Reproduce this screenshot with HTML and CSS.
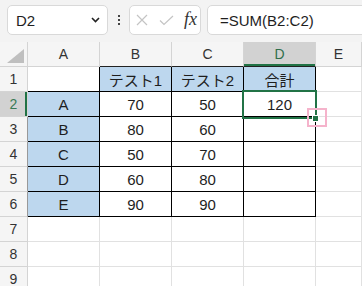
FILE: index.html
```html
<!DOCTYPE html>
<html lang="ja">
	<head>
		<meta charset="UTF-8" />
		<meta name="viewport" content="width=device-width, initial-scale=1.0" />
		<title>Sheet</title>
		<link rel="stylesheet" href="styles.css">
	</head>
	<body>
		<header class="toolbar">
			<div class="namebox">
				<span>D2</span>
				<svg class="chevron" width="9" height="6" viewBox="0 0 9 6"><path d="M1 1 L4.5 4.5 L8 1" fill="none" stroke="#222" stroke-width="1.6"/></svg>
			</div>
			<div class="dots"><i></i><i></i><i></i></div>
			<div class="fxbox">
				<svg width="12" height="12" viewBox="0 0 12 12"><path d="M1 1 L11 11 M11 1 L1 11" stroke="#c4c4c4" stroke-width="1.2"/></svg>
				<svg width="15" height="11" viewBox="0 0 15 11"><path d="M1 5.5 L5 9.5 L14 1" fill="none" stroke="#c4c4c4" stroke-width="1.2"/></svg>
				<span class="fx">fx</span>
			</div>
			<div class="formula">=SUM(B2:C2)</div>
		</header>
		<main class="sheet">
			<div class="corner"><span></span></div>
			<div class="colhead">A</div>
			<div class="colhead edge">B</div>
			<div class="colhead edge">C</div>
			<div class="colhead sel">D</div>
			<div class="colhead">E</div>

			<div class="rowhead">1</div>
			<div class="cell a1"></div>
			<div class="cell t blue">テスト1</div>
			<div class="cell t blue">テスト2</div>
			<div class="cell t blue">合計</div>
			<div class="cell"></div>

			<div class="rowhead sel">2</div>
			<div class="cell t blue">A</div>
			<div class="cell t">70</div>
			<div class="cell t">50</div>
			<div class="cell t active">120<span class="handle"></span><span class="mark"></span></div>
			<div class="cell"></div>

			<div class="rowhead edge">3</div>
			<div class="cell t blue">B</div>
			<div class="cell t">80</div>
			<div class="cell t">60</div>
			<div class="cell t"></div>
			<div class="cell"></div>

			<div class="rowhead edge">4</div>
			<div class="cell t blue">C</div>
			<div class="cell t">50</div>
			<div class="cell t">70</div>
			<div class="cell t"></div>
			<div class="cell"></div>

			<div class="rowhead edge">5</div>
			<div class="cell t blue">D</div>
			<div class="cell t">60</div>
			<div class="cell t">80</div>
			<div class="cell t"></div>
			<div class="cell"></div>

			<div class="rowhead edge">6</div>
			<div class="cell t blue">E</div>
			<div class="cell t">90</div>
			<div class="cell t">90</div>
			<div class="cell t"></div>
			<div class="cell"></div>

			<div class="rowhead">7</div>
			<div class="cell"></div>
			<div class="cell"></div>
			<div class="cell"></div>
			<div class="cell"></div>
			<div class="cell"></div>

			<div class="rowhead">8</div>
			<div class="cell"></div>
			<div class="cell"></div>
			<div class="cell"></div>
			<div class="cell"></div>
			<div class="cell"></div>

			<div class="rowhead">9</div>
			<div class="cell"></div>
			<div class="cell"></div>
			<div class="cell"></div>
			<div class="cell"></div>
			<div class="cell"></div>
		</main>
	</body>
</html>
```

FILE: styles.css
```css
body {
	margin: 0;
	width: 362px;
	height: 286px;
	overflow: hidden;
	background: #fff;
	font-family: 'Liberation Sans', 'Noto Sans CJK JP', sans-serif;
	color: #1e1e1e;
}
.toolbar {
	display: flex;
	align-items: flex-start;
	height: 42px;
	box-sizing: border-box;
	padding: 5px 0 0 7px;
	background: #f3f3f3;
	overflow: hidden;
}
.namebox,
.fxbox,
.formula {
	height: 30px;
	box-sizing: border-box;
	background: #fff;
	border: 1px solid #d9d9d9;
	border-radius: 5px;
	display: flex;
	align-items: center;
}
.namebox {
	width: 101px;
	padding: 0 7px 0 8px;
	justify-content: space-between;
	font-size: 15px;
}
.dots {
	width: 21px;
	height: 30px;
	display: flex;
	flex-direction: column;
	align-items: center;
	justify-content: center;
	gap: 2px;
}
.dots i {
	width: 2px;
	height: 2px;
	background: #444;
}
.fxbox {
	width: 72px;
	padding: 0 0 0 6px;
	gap: 0;
}
.fxbox svg:first-child {
	margin-right: 11px;
}
.fxbox svg:nth-child(2) {
	margin-right: 10px;
}
.fx {
	font-family: 'Liberation Serif', 'DejaVu Serif', serif;
	font-style: italic;
	font-size: 18px;
	color: #333;
	margin-top: -2px;
}
.formula {
	flex: 1;
	margin-left: 6px;
	margin-right: -6px;
	padding-left: 12px;
	font-size: 15px;
}
.sheet {
	display: grid;
	grid-template-columns: 28px repeat(4, 72px) 1fr;
	grid-auto-rows: 25px;
}
.sheet > div {
	box-sizing: border-box;
	border-right: 1px solid #e1e1e1;
	border-bottom: 1px solid #e1e1e1;
	display: flex;
	align-items: center;
	justify-content: center;
}
.corner,
.colhead,
.rowhead {
	background: #f5f5f5;
	font-size: 14px;
	color: #333;
}
.sheet > .colhead,
.sheet > .rowhead,
.sheet > .corner {
	border-color: #d4d4d4;
}
.corner {
	position: relative;
}
.corner span {
	position: absolute;
	right: 3px;
	bottom: 3px;
	width: 0;
	height: 0;
	border-left: 17px solid transparent;
	border-bottom: 14px solid #bfbfbf;
}
.sheet > .colhead.edge {
	border-bottom-color: #222;
}
.sheet > .colhead.sel {
	background: #d2d2d2;
	color: #2f6f4b;
	border-bottom-color: #222;
	box-shadow: inset 0 -2px #217346;
}
.sheet > .rowhead.edge {
	border-right-color: #999;
}
.sheet > .rowhead.sel {
	background: #d2d2d2;
	color: #3a7a55;
	box-shadow: inset -2px 0 #217346;
}
.cell {
	font-size: 15px;
}
.sheet > .a1 {
	border-right-color: #000;
	border-bottom-color: #000;
}
.sheet > .t {
	border-right-color: #000;
	border-bottom-color: #000;
}
.blue {
	background: #bdd7ee;
}
.active {
	position: relative;
}
.active::after {
	content: '';
	position: absolute;
	left: -2px;
	top: -2px;
	right: -2px;
	bottom: -3px;
	border: 2px solid #217346;
}
.handle {
	position: absolute;
	right: -4px;
	bottom: -6px;
	width: 5px;
	height: 5px;
	background: #217346;
	border: 1px solid #fff;
	z-index: 2;
}
.mark {
	position: absolute;
	right: -12px;
	bottom: -11px;
	width: 16px;
	height: 15px;
	border: 2px solid #f5b3cb;
	z-index: 3;
}
```
